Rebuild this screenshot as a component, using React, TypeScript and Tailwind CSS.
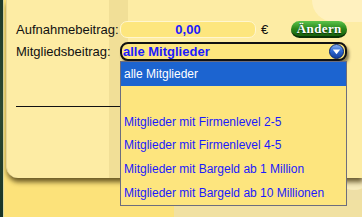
import React from "react";

const items = [
  "alle Mitglieder",
  "",
  "Mitglieder mit Firmenlevel 2-5",
  "Mitglieder mit Firmenlevel 4-5",
  "Mitglieder mit Bargeld ab 1 Million",
  "Mitglieder mit Bargeld ab 10 Millionen",
];

function ArrowIcon() {
  return (
    <svg width="15" height="15" viewBox="0 0 15 15">
      <defs>
        <linearGradient id="ab" x1="0" y1="0" x2="0" y2="1">
          <stop offset="0" stopColor="#8fb4ef" />
          <stop offset="0.45" stopColor="#2f6ad4" />
          <stop offset="1" stopColor="#123c9a" />
        </linearGradient>
      </defs>
      <circle cx="7.5" cy="7.5" r="7" fill="url(#ab)" stroke="#0d2a6e" strokeWidth="1" />
      <path d="M3.8 5.6 L11.2 5.6 L7.5 10.2 Z" fill="#ffffff" />
    </svg>
  );
}

export default function App() {
  return (
    <div
      className="relative flex w-[362px] h-[217px] overflow-hidden bg-[#fce27a]"
      style={{ fontFamily: '"Liberation Sans", Arial, sans-serif' }}
    >
      <div className="w-[3px] h-full bg-gradient-to-b from-[#1d3b2b] via-[#2d4a32] to-[#183426]" />
      <div className="w-px h-full bg-[#d9d7a0]" />
      <div className="relative flex-1 h-full pl-[2px]">
        {/* right side texture */}
        <div className="absolute right-0 top-[88px] w-[16px] h-[140px] bg-[#eedfa6]" />
        <div className="absolute left-[170px] top-[200px] w-[200px] h-[20px] bg-[#f1e1a2]" />
        <div className="absolute left-[330px] top-[150px] w-[40px] h-[40px] rounded-full bg-[#f7ebbd]" />

        {/* panel */}
        <div className="relative h-[178px] rounded-bl-[12px] bg-[#fdeca4] border-l border-[#e6d699] shadow-[1px_4px_5px_rgba(70,55,15,0.8)] pt-[21px] pl-[9px]">
          <div className="absolute right-[-20px] top-[-22px] w-[70px] h-[44px] rounded-full bg-[#fff3c6] opacity-80" />
          <div className="absolute left-[102px] top-0 w-[19px] h-full bg-[rgba(120,95,20,0.09)]" />
          <div className="relative flex items-center h-[17px]">
            <div className="w-[104px] text-[13px] text-[#111] leading-none">Aufnahmebeitrag:</div>
            <div className="w-[136px] h-[17px] rounded-[7px] border border-[#fff6cf] bg-[#fde67e] flex items-center justify-center text-[13px] font-bold text-[#1a1aff] leading-none">
              0,00
            </div>
            <div className="ml-[5px] text-[13px] text-[#111] leading-none">€</div>
            <div
              className="ml-[23px] w-[56px] h-[17px] rounded-full bg-gradient-to-b from-[#5cc44a] via-[#2c8a1c] to-[#17620d] border-b-2 border-[#0b3306] flex items-center justify-center text-white text-[13px] font-bold leading-none tracking-[0.4px] [text-shadow:0_1px_1px_rgba(0,0,0,0.6)]"
              style={{ fontFamily: '"Liberation Serif", "Times New Roman", serif' }}
            >
              Ändern
            </div>
          </div>
          <div className="relative flex items-center h-[19px] mt-[4px]">
            <div className="w-[104px] text-[13px] text-[#111] leading-none">Mitgliedsbeitrag:</div>
            <div className="w-[227px] h-[19px] rounded-[8px] border-2 border-[#111] bg-[#fde67e] flex items-center justify-between pl-[1px] pr-[1px] shadow-[2px_3px_3px_rgba(60,50,30,0.6)]">
              <span className="text-[13px] font-bold text-[#1a1aff] leading-none">alle Mitglieder</span>
              <ArrowIcon />
            </div>
          </div>
          <div className="relative mt-[45px] h-px w-[300px] bg-[#111]" />
        </div>

        {/* dropdown list */}
        <div className="absolute left-[116px] top-[61px] w-[227px] h-[145px] border border-[#6d6d7d] bg-[#fde57e] flex flex-col">
          {items.map((t, i) => (
            <div
              key={i}
              className={
                i === 0
                  ? "h-[24px] flex items-center pl-[3px] bg-[#1c64d0] text-white text-[12px] leading-none"
                  : "h-[24px] flex items-center pl-[3px] text-[#1a1aff] text-[12px] leading-none"
              }
            >
              {t}
            </div>
          ))}
        </div>
      </div>
    </div>
  );
}
